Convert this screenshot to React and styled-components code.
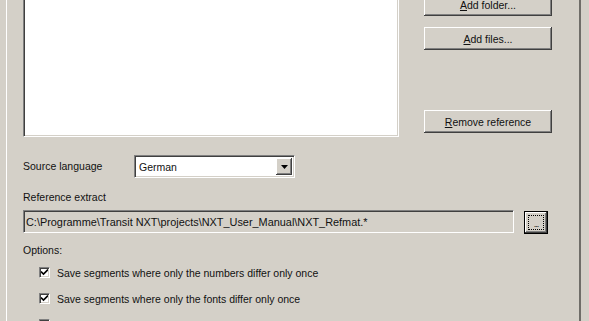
import React from 'react';
import styled, { createGlobalStyle } from 'styled-components';

const Global = createGlobalStyle`
  html, body { margin: 0; padding: 0; background: #d4d0c8; }
  body {
    width: 589px; height: 321px; overflow: hidden;
    font-family: "Liberation Sans", Arial, sans-serif;
    font-size: 10.5px; color: #111;
  }
`;

const Frame = styled.div`
  width: 589px;
  height: 321px;
  overflow: hidden;
  display: flex;
  background: #d4d0c8;
`;

const Panel = styled.div`
  margin-left: 6px;
  width: 575px;
  height: 340px;
  box-sizing: border-box;
  border-left: 1px solid #ffffff;
  border-right: 2px solid #6f6d68;
  padding-left: 16px;
  display: flex;
  flex-direction: column;
`;

const TopRow = styled.div`
  display: flex;
  gap: 25px;
  margin-top: -8px;
  height: 145px;
`;

const sunken = `
  box-sizing: border-box;
  border: 1px solid;
  border-color: #808080 #ffffff #ffffff #808080;
  box-shadow: inset 1px 1px 0 #404040, inset -1px -1px 0 #d4d0c8;
`;

const raised = `
  box-sizing: border-box;
  border: none;
  background: #d4d0c8;
  box-shadow: inset -1px -1px 0 #404040, inset 1px 1px 0 #ffffff,
    inset -2px -2px 0 #808080, inset 2px 2px 0 #d4d0c8;
`;

const ListBox = styled.div`
  ${sunken}
  width: 376px;
  height: 145px;
  background: #ffffff;
`;

const ButtonCol = styled.div`
  width: 128px;
  display: flex;
  flex-direction: column;
`;

const Button = styled.button`
  ${raised}
  width: 128px;
  height: 23px;
  margin-top: ${p => p.$top}px;
  padding: 0;
  font-family: "Liberation Sans", Arial, sans-serif;
  font-size: 10.5px;
  color: #111;
  text-align: center;
`;

const Row = styled.div`
  display: flex;
  align-items: ${p => p.$align || 'center'};
  margin-top: ${p => p.$top}px;
  height: ${p => p.$h}px;
`;

const Label = styled.div`
  width: ${p => (p.$w ? `${p.$w}px` : 'auto')};
  line-height: 13px;
  margin-top: ${p => p.$top || 0}px;
`;

const Select = styled.div`
  ${sunken}
  width: 161px;
  height: 23px;
  background: #ffffff;
  display: flex;
  align-items: stretch;
  padding: 2px;
`;

const SelectText = styled.div`
  flex: 1;
  display: flex;
  align-items: center;
  padding-left: 2px;
`;

const ArrowBtn = styled.div`
  ${raised}
  width: 16px;
  display: flex;
  align-items: center;
  justify-content: center;
`;

const TextField = styled.div`
  ${sunken}
  width: 491px;
  height: 23px;
  background: #d4d0c8;
  display: flex;
  align-items: center;
  padding-left: 2px;
  font-size: 10.9px;
  white-space: nowrap;
  overflow: hidden;
`;

const BrowseBtn = styled.div`
  box-sizing: border-box;
  width: 24px;
  height: 23px;
  margin-left: 10px;
  margin-top: 1px;
  border: 1px solid #000;
  background: #d4d0c8;
  box-shadow: inset -1px -1px 0 #404040, inset 1px 1px 0 #ffffff,
    inset -2px -2px 0 #808080;
  display: flex;
  align-items: center;
  justify-content: center;
`;

const FocusRect = styled.div`
  box-sizing: border-box;
  width: 16px;
  height: 15px;
  border: 1px dotted #000;
  display: flex;
  align-items: flex-end;
  justify-content: center;
  font-size: 9px;
  line-height: 9px;
  letter-spacing: -1px;
`;

const OptionRow = styled.div`
  display: flex;
  align-items: center;
  height: 13px;
  margin-top: ${p => p.$top}px;
  padding-left: 16px;
  gap: 7px;
  white-space: nowrap;
`;

const CheckBox = styled.div`
  ${sunken}
  width: 11px;
  height: 11px;
  background: #ffffff;
  display: flex;
  align-items: center;
  justify-content: center;
`;

const Check = () => (
  <svg width="7" height="7" viewBox="0 0 7 7">
    <path d="M0 2.5 L2.5 5 L7 0.5" stroke="#000" strokeWidth="1.6" fill="none" />
  </svg>
);

const Option = ({ top, checked, children }) => (
  <OptionRow $top={top}>
    <CheckBox>{checked && <Check />}</CheckBox>
    <span>{children}</span>
  </OptionRow>
);

export default function App() {
  return (
    <Frame>
      <Global />
      <Panel>
        <TopRow>
          <ListBox />
          <ButtonCol>
            <Button $top={1}><u>A</u>dd folder...</Button>
            <Button $top={11}><u>A</u>dd files...</Button>
            <Button $top={60}><u>R</u>emove reference</Button>
          </ButtonCol>
        </TopRow>

        <Row $top={18} $h={23}>
          <Label $w={111}>Source language</Label>
          <Select>
            <SelectText>German</SelectText>
            <ArrowBtn>
              <svg width="7" height="4" viewBox="0 0 7 4">
                <path d="M0 0 H7 L3.5 4 Z" fill="#000" />
              </svg>
            </ArrowBtn>
          </Select>
        </Row>

        <Label $top={13}>Reference extract</Label>

        <Row $top={6} $h={24} $align="flex-start">
          <TextField>C:\Programme\Transit NXT\projects\NXT_User_Manual\NXT_Refmat.*</TextField>
          <BrowseBtn>
            <FocusRect>...</FocusRect>
          </BrowseBtn>
        </Row>

        <Label $top={10}>Options:</Label>

        <Option top={9} checked>Save segments where only the numbers differ only once</Option>
        <Option top={13} checked>Save segments where only the fonts differ only once</Option>
        <Option top={13}>Save all segments in one file</Option>
      </Panel>
    </Frame>
  );
}
